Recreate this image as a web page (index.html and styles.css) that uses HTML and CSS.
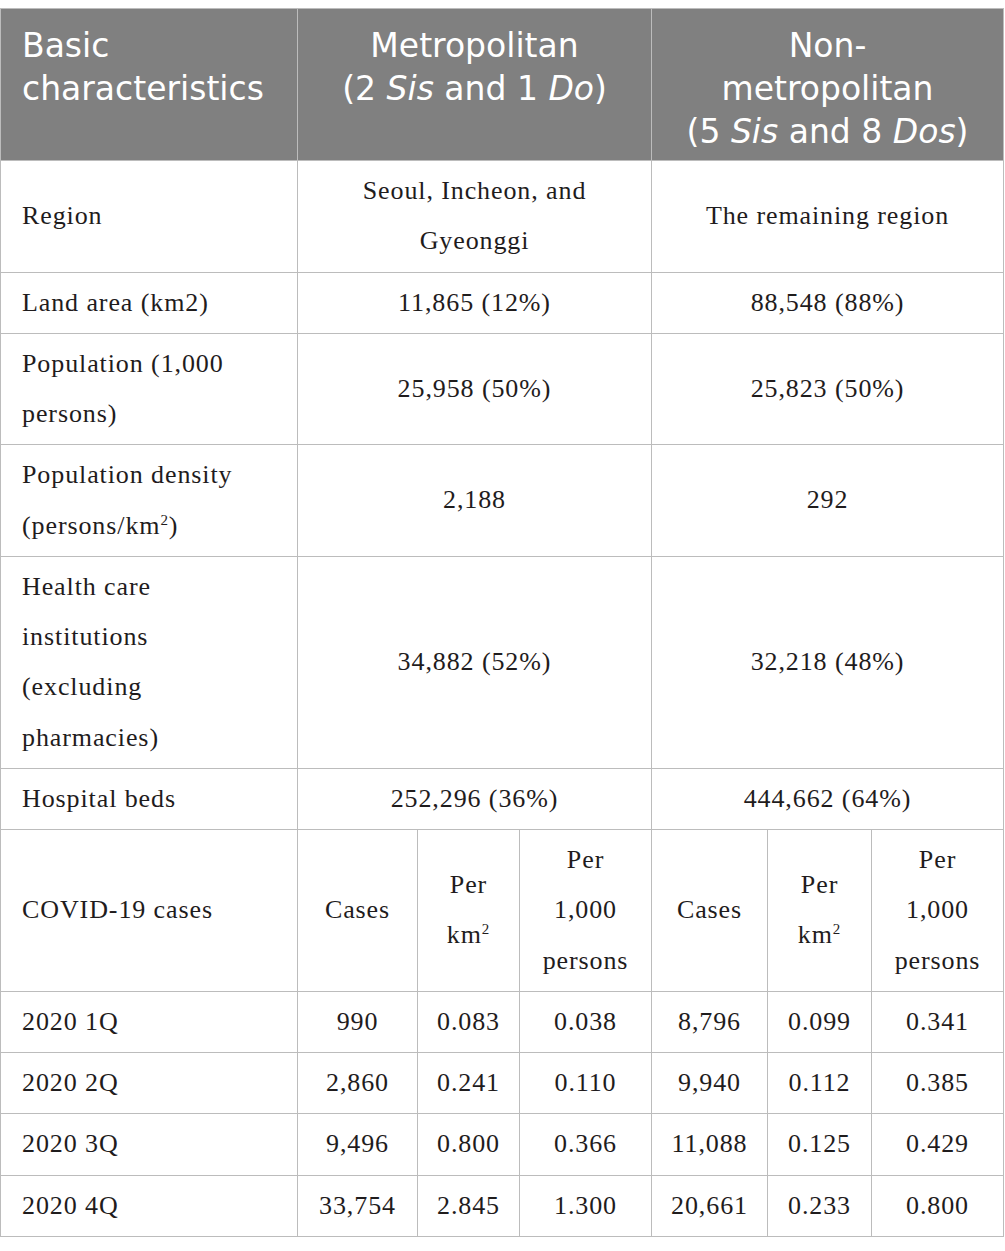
FILE: index.html
```html
<!DOCTYPE html>
<html lang="en">
<head>
<meta charset="utf-8">
<title>Table</title>
<link rel="stylesheet" href="styles.css">
</head>
<body>
<table class="data">
  <colgroup>
    <col class="c-label">
    <col class="c-cases">
    <col class="c-km">
    <col class="c-pers">
    <col class="c-cases2">
    <col class="c-km2">
    <col class="c-pers2">
  </colgroup>
  <thead>
    <tr>
      <th class="h-left">Basic<br>characteristics</th>
      <th colspan="3">Metropolitan<br>(2 <i>Sis</i> and 1 <i>Do</i>)</th>
      <th colspan="3">Non-<br>metropolitan<br>(5 <i>Sis</i> and 8 <i>Dos</i>)</th>
    </tr>
  </thead>
  <tbody>
    <tr>
      <td class="label">Region</td>
      <td colspan="3" class="val wide">Seoul, Incheon, and Gyeonggi</td>
      <td colspan="3" class="val wide">The remaining region</td>
    </tr>
    <tr>
      <td class="label">Land area (km2)</td>
      <td colspan="3" class="val wide">11,865 (12%)</td>
      <td colspan="3" class="val wide">88,548 (88%)</td>
    </tr>
    <tr>
      <td class="label">Population (1,000 persons)</td>
      <td colspan="3" class="val wide">25,958 (50%)</td>
      <td colspan="3" class="val wide">25,823 (50%)</td>
    </tr>
    <tr>
      <td class="label">Population density (persons/km<sup>2</sup>)</td>
      <td colspan="3" class="val wide">2,188</td>
      <td colspan="3" class="val wide">292</td>
    </tr>
    <tr>
      <td class="label">Health care institutions (excluding pharmacies)</td>
      <td colspan="3" class="val wide">34,882 (52%)</td>
      <td colspan="3" class="val wide">32,218 (48%)</td>
    </tr>
    <tr>
      <td class="label">Hospital beds</td>
      <td colspan="3" class="val wide">252,296 (36%)</td>
      <td colspan="3" class="val wide">444,662 (64%)</td>
    </tr>
    <tr>
      <td class="label">COVID-19 cases</td>
      <td class="val">Cases</td>
      <td class="val">Per km<sup>2</sup></td>
      <td class="val">Per 1,000 persons</td>
      <td class="val">Cases</td>
      <td class="val">Per km<sup>2</sup></td>
      <td class="val">Per 1,000 persons</td>
    </tr>
    <tr>
      <td class="label">2020 1Q</td>
      <td class="val">990</td><td class="val">0.083</td><td class="val">0.038</td>
      <td class="val">8,796</td><td class="val">0.099</td><td class="val">0.341</td>
    </tr>
    <tr>
      <td class="label">2020 2Q</td>
      <td class="val">2,860</td><td class="val">0.241</td><td class="val">0.110</td>
      <td class="val">9,940</td><td class="val">0.112</td><td class="val">0.385</td>
    </tr>
    <tr>
      <td class="label">2020 3Q</td>
      <td class="val">9,496</td><td class="val">0.800</td><td class="val">0.366</td>
      <td class="val">11,088</td><td class="val">0.125</td><td class="val">0.429</td>
    </tr>
    <tr>
      <td class="label">2020 4Q</td>
      <td class="val">33,754</td><td class="val">2.845</td><td class="val">1.300</td>
      <td class="val">20,661</td><td class="val">0.233</td><td class="val">0.800</td>
    </tr>
  </tbody>
</table>
</body>
</html>
```
FILE: styles.css
```css
html, body {
  margin: 0;
  padding: 0;
  background: #ffffff;
}

body {
  padding-top: 8px;
}

.data {
  border-collapse: collapse;
  table-layout: fixed;
  width: 1004px;
  color: #1f1c1d;
}

.c-label { width: 297px; }
.c-cases { width: 120px; }
.c-km { width: 102px; }
.c-pers { width: 132px; }
.c-cases2 { width: 116px; }
.c-km2 { width: 104px; }
.c-pers2 { width: 132px; }

.data th,
.data td {
  border: 1.5px solid #bcbcbc;
}

.data th {
  background: #808080;
  color: #ffffff;
  font-family: "DejaVu Sans", "Open Sans", sans-serif;
  font-weight: 400;
  font-size: 33px;
  line-height: 43px;
  text-align: center;
  vertical-align: top;
  padding: 15px 14px 7px;
  white-space: nowrap;
}

.data th i {
  font-style: oblique;
}

.data th.h-left {
  text-align: left;
  padding-left: 21px;
}

.data td {
  font-family: "Liberation Serif", "Times New Roman", serif;
  font-size: 26px;
  letter-spacing: 0.9px;
  line-height: 50.25px;
  padding: 5px 21px;
  vertical-align: middle;
}

.data td.label {
  text-align: left;
  padding-right: 36px;
}

.data td.val {
  text-align: center;
  padding-left: 18px;
  padding-right: 18px;
}

.data td.val.wide {
  padding-left: 40px;
  padding-right: 40px;
}

.data sup {
  font-size: 15px;
  line-height: 0;
  vertical-align: 9px;
}
```
